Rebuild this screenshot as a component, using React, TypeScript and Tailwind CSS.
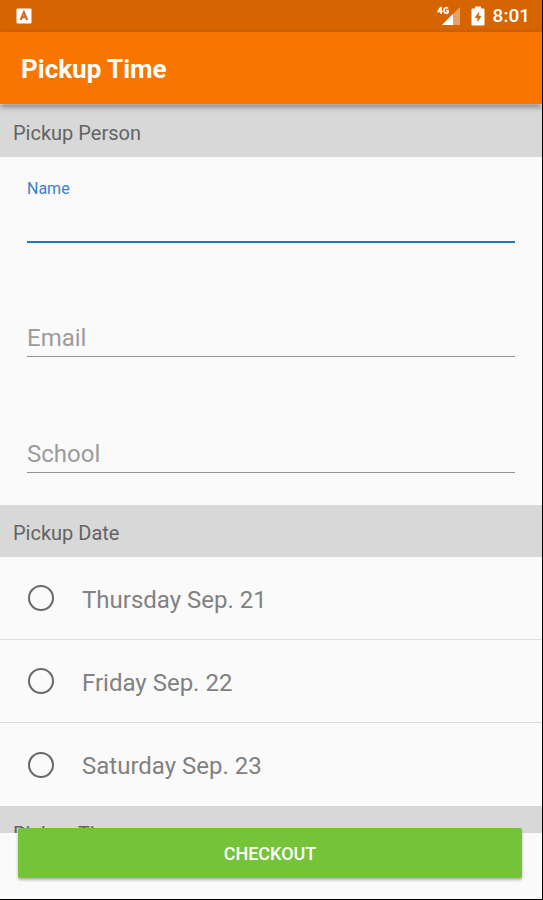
import React from "react";

const DATES = ["Thursday Sep. 21", "Friday Sep. 22", "Saturday Sep. 23"];

function SectionHeader({ children }: { children: string }) {
  return (
    <h2 className="flex h-[52px] items-center bg-[#d8d8d8] px-[13px] pt-[3px] text-[20px] leading-6 text-[#646464]">
      {children}
    </h2>
  );
}

function Field({ id, label, type = "text" }: { id: string; label: string; type?: string }) {
  return (
    <div className="flex h-[116px] flex-col justify-end px-[27px] pb-8">
      <input
        id={id}
        type={type}
        aria-label={label}
        placeholder={label}
        className="h-9 w-full border-b border-[#929292] bg-transparent pb-0.5 text-[24px] text-[#333] outline-none placeholder:text-[#9c9c9c]"
      />
    </div>
  );
}

function ActiveField({ id, label }: { id: string; label: string }) {
  return (
    <div className="flex h-[116px] flex-col justify-between px-[27px] pt-[22px] pb-[30px]">
      <label htmlFor={id} className="text-[16px] leading-5 text-[#3a82c9]">
        {label}
      </label>
      <input
        id={id}
        type="text"
        className="h-9 w-full border-b-2 border-[#1c78be] bg-transparent pb-0.5 text-[24px] text-[#333] outline-none"
      />
    </div>
  );
}

function Option({ group, label }: { group: string; label: string }) {
  return (
    <label className="flex h-[83px] items-center gap-7 px-7 text-[24px] leading-7 text-[#818181]">
      <input
        type="radio"
        name={group}
        value={label}
        className="size-[26px] shrink-0 appearance-none rounded-full border-2 border-[#686868] checked:border-8 checked:border-[#1c78be]"
      />
      <span className="pt-[3px]">{label}</span>
    </label>
  );
}

function SignalIcon() {
  return (
    <svg viewBox="0 0 24 20" className="h-5 w-6" aria-hidden="true">
      <path d="M23 1V19H5Z" fill="#fff" fillOpacity="0.4" />
      <path d="M16 8V19H5Z" fill="#fff" />
      <g fill="none" stroke="#fff" strokeWidth="1.6">
        <path d="M4 1 1 5.5H5.6M4.2 1V8" />
        <path d="M11 2.3C9.5 1 7 1.6 7 4.4S9.8 8 11 6.6V4.6H9.2" />
      </g>
    </svg>
  );
}

function BatteryIcon() {
  return (
    <svg viewBox="0 0 14 20" className="h-5 w-3.5" aria-hidden="true">
      <path
        fill="#fff"
        d="M4 0.5h6v2h2.4c.6 0 1.1.5 1.1 1.1v14.8c0 .6-.5 1.1-1.1 1.1H1.6c-.6 0-1.1-.5-1.1-1.1V3.6C.5 3 1 2.500 1.6 2.500H4Z"
      />
      <path fill="#d66400" d="M8.200 5.500 3.600 11.800H6.400V16.200L10.400 10H7.700Z" />
    </svg>
  );
}

export default function App() {
  return (
    <div className="flex h-screen flex-col border-r border-b border-black bg-[#fafafa] font-['Roboto',sans-serif]">
      <div className="flex h-8 shrink-0 items-center justify-between bg-[#d66400] pr-3 pl-4 text-white">
        <svg viewBox="0 0 16 16" className="size-4" aria-hidden="true">
          <rect x="0.5" y="0.5" width="15" height="15" rx="1" fill="#fff" />
          <path
            d="M4.700 12 7.900 4.200 11.200 12M5.800 9.300H10"
            fill="none"
            stroke="#d0642c"
            strokeWidth="2"
          />
        </svg>
        <div className="flex items-center gap-2">
          <div className="flex items-center gap-2.5">
            <SignalIcon />
            <BatteryIcon />
          </div>
          <span className="text-[19px] leading-6 font-medium">8:01</span>
        </div>
      </div>

      <header className="z-10 flex h-[72px] shrink-0 items-center bg-[#f87500] px-[21px] pt-0.5 shadow-[0_3px_6px_rgba(0,0,0,0.4)]">
        <h1 className="text-[26px] leading-8 font-bold text-white">Pickup Time</h1>
      </header>

      <main className="min-h-0 flex-1 overflow-hidden">
        <section className="pt-px">
          <SectionHeader>Pickup Person</SectionHeader>
          <ActiveField id="name" label="Name" />
          <Field id="email" label="Email" type="email" />
          <Field id="school" label="School" />
        </section>
        <section>
          <SectionHeader>Pickup Date</SectionHeader>
          <div className="divide-y divide-[#dedede]">
            {DATES.map((date) => (
              <Option key={date} group="date" label={date} />
            ))}
          </div>
        </section>
        <section>
          <SectionHeader>Pickup Time</SectionHeader>
        </section>
      </main>

      <footer className="z-10 flex h-[66px] shrink-0 items-start pr-5 pl-[18px]">
        <button
          type="button"
          className="-mt-[5px] h-[50px] w-full rounded-xs bg-[#74c338] text-[18px] font-medium text-white shadow-[0_2px_3px_rgba(0,0,0,0.3)]"
        >
          CHECKOUT
        </button>
      </footer>
    </div>
  );
}
